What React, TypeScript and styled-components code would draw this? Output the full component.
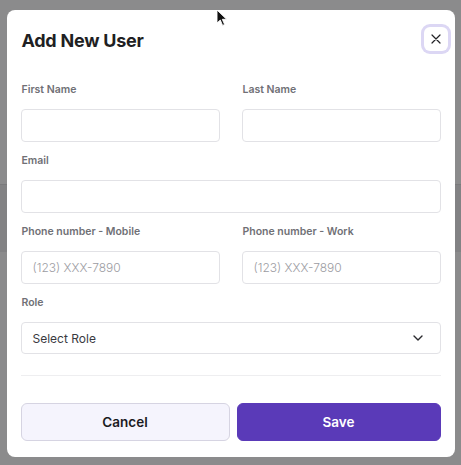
import styled, { createGlobalStyle } from "styled-components";

const GlobalStyle = createGlobalStyle`
  html, body {
    margin: 0;
    padding: 0;
    background: #8b8b8c;
    font-family: Inter, "Noto Sans", sans-serif;
  }
  * {
    box-sizing: border-box;
  }
`;

export default function App() {
  return (
    <>
      <GlobalStyle />
      <Backdrop>
        <Band />
        <Modal role="dialog" aria-labelledby="add-user-title">
          <Header>
            <Title id="add-user-title">Add New User</Title>
            <CloseButton aria-label="Close">
              <svg width="10" height="10" viewBox="0 0 10 10">
                <path
                  d="M1 1L9 9M9 1L1 9"
                  stroke="#222226"
                  strokeWidth="1.2"
                  strokeLinecap="round"
                />
              </svg>
            </CloseButton>
          </Header>

          <Form>
            <Row>
              <Field>
                <Label>First Name</Label>
                <Input />
              </Field>
              <Field>
                <Label>Last Name</Label>
                <Input />
              </Field>
            </Row>

            <Field>
              <Label>Email</Label>
              <Input type="email" />
            </Field>

            <Row>
              <Field>
                <Label>Phone number - Mobile</Label>
                <Input placeholder="(123) XXX-7890" />
              </Field>
              <Field>
                <Label>Phone number - Work</Label>
                <Input placeholder="(123) XXX-7890" />
              </Field>
            </Row>

            <Field>
              <Label>Role</Label>
              <Select>
                <span>Select Role</span>
                <svg width="10" height="6" viewBox="0 0 10 6">
                  <path
                    d="M1 1L5 5L9 1"
                    fill="none"
                    stroke="#2a2a2e"
                    strokeWidth="1.4"
                    strokeLinecap="round"
                    strokeLinejoin="round"
                  />
                </svg>
              </Select>
            </Field>
          </Form>

          <Divider />

          <Footer>
            <Button>Cancel</Button>
            <Button $primary>Save</Button>
          </Footer>
        </Modal>

        <Cursor width="12" height="18" viewBox="0 0 12 18">
          <path
            d="M1 1L1 14L4.3 11L6.6 16.4L8.6 15.5L6.3 10.3L10.6 10.3Z"
            fill="#111"
            stroke="#fff"
            strokeWidth="0.9"
            strokeLinejoin="round"
          />
        </Cursor>
      </Backdrop>
    </>
  );
}

const Backdrop = styled.div`
  position: relative;
  width: 100vw;
  height: 100vh;
  display: flex;
  align-items: flex-start;
  justify-content: center;
  padding-top: 10px;
  background: #8b8b8c;
  overflow: hidden;
`;

const Band = styled.div`
  position: absolute;
  left: 0;
  right: 0;
  top: 184px;
  height: 68px;
  background: #828284;
  border-top: 1px solid #7a7a7c;
`;

const Modal = styled.div`
  position: relative;
  width: 448px;
  height: 447px;
  background: #ffffff;
  border-radius: 8px;
  padding: 17px 14px 16px;
  display: flex;
  flex-direction: column;
`;

const Header = styled.div`
  display: flex;
  justify-content: space-between;
  align-items: flex-start;
  height: 28px;
`;

const Title = styled.h2`
  margin: 0 0 0 1px;
  font-size: 18px;
  line-height: 28px;
  font-weight: 700;
  color: #1f1f23;
  letter-spacing: -0.25px;
`;

const CloseButton = styled.button`
  width: 24px;
  height: 24px;
  margin: 0 -7px 0 0;
  padding: 0;
  display: flex;
  align-items: center;
  justify-content: center;
  background: #ffffff;
  border: none;
  border-radius: 6px;
  box-shadow: 0 0 0 3px #dcd7f4;
  cursor: pointer;
`;

const Form = styled.div`
  display: flex;
  flex-direction: column;
  gap: 12px;
  margin-top: 28px;
`;

const Row = styled.div`
  display: grid;
  grid-template-columns: 1fr 1fr;
  gap: 22px;
`;

const Field = styled.div`
  display: flex;
  flex-direction: column;
  gap: 12px;
`;

const Label = styled.label`
  margin-left: 1px;
  font-size: 10.5px;
  line-height: 14px;
  font-weight: 600;
  color: #707076;
`;

const Input = styled.input`
  width: 100%;
  height: 33px;
  padding: 0 11px;
  border: 1px solid #e2e2e6;
  border-radius: 4px;
  background: #ffffff;
  font-family: Inter, "Noto Sans", sans-serif;
  font-size: 12px;
  font-weight: 300;
  color: #2a2a2e;
  outline: none;

  &::placeholder {
    color: #9c9ca2;
  }
`;

const Select = styled.div`
  height: 32px;
  padding: 0 17px 0 11px;
  display: flex;
  align-items: center;
  justify-content: space-between;
  border: 1px solid #e2e2e6;
  border-radius: 4px;
  font-size: 12px;
  color: #3a3a3f;
`;

const Divider = styled.hr`
  margin: 21px 0 0;
  border: none;
  border-top: 1px solid #eeeef0;
`;

const Footer = styled.div`
  display: grid;
  grid-template-columns: 209px 1fr;
  gap: 7px;
  margin-top: 27px;
`;

const Button = styled.button<{ $primary?: boolean }>`
  height: 38px;
  border-radius: 6px;
  font-family: Inter, "Noto Sans", sans-serif;
  font-size: 13.5px;
  font-weight: 600;
  cursor: pointer;
  background: ${(p) => (p.$primary ? "#5a3ab8" : "#f5f4fd")};
  color: ${(p) => (p.$primary ? "#ffffff" : "#1b1b1f")};
  border: 1px solid ${(p) => (p.$primary ? "#5a3ab8" : "#d6d4e2")};
`;

const Cursor = styled.svg`
  position: absolute;
  left: 216px;
  top: 9px;
`;
